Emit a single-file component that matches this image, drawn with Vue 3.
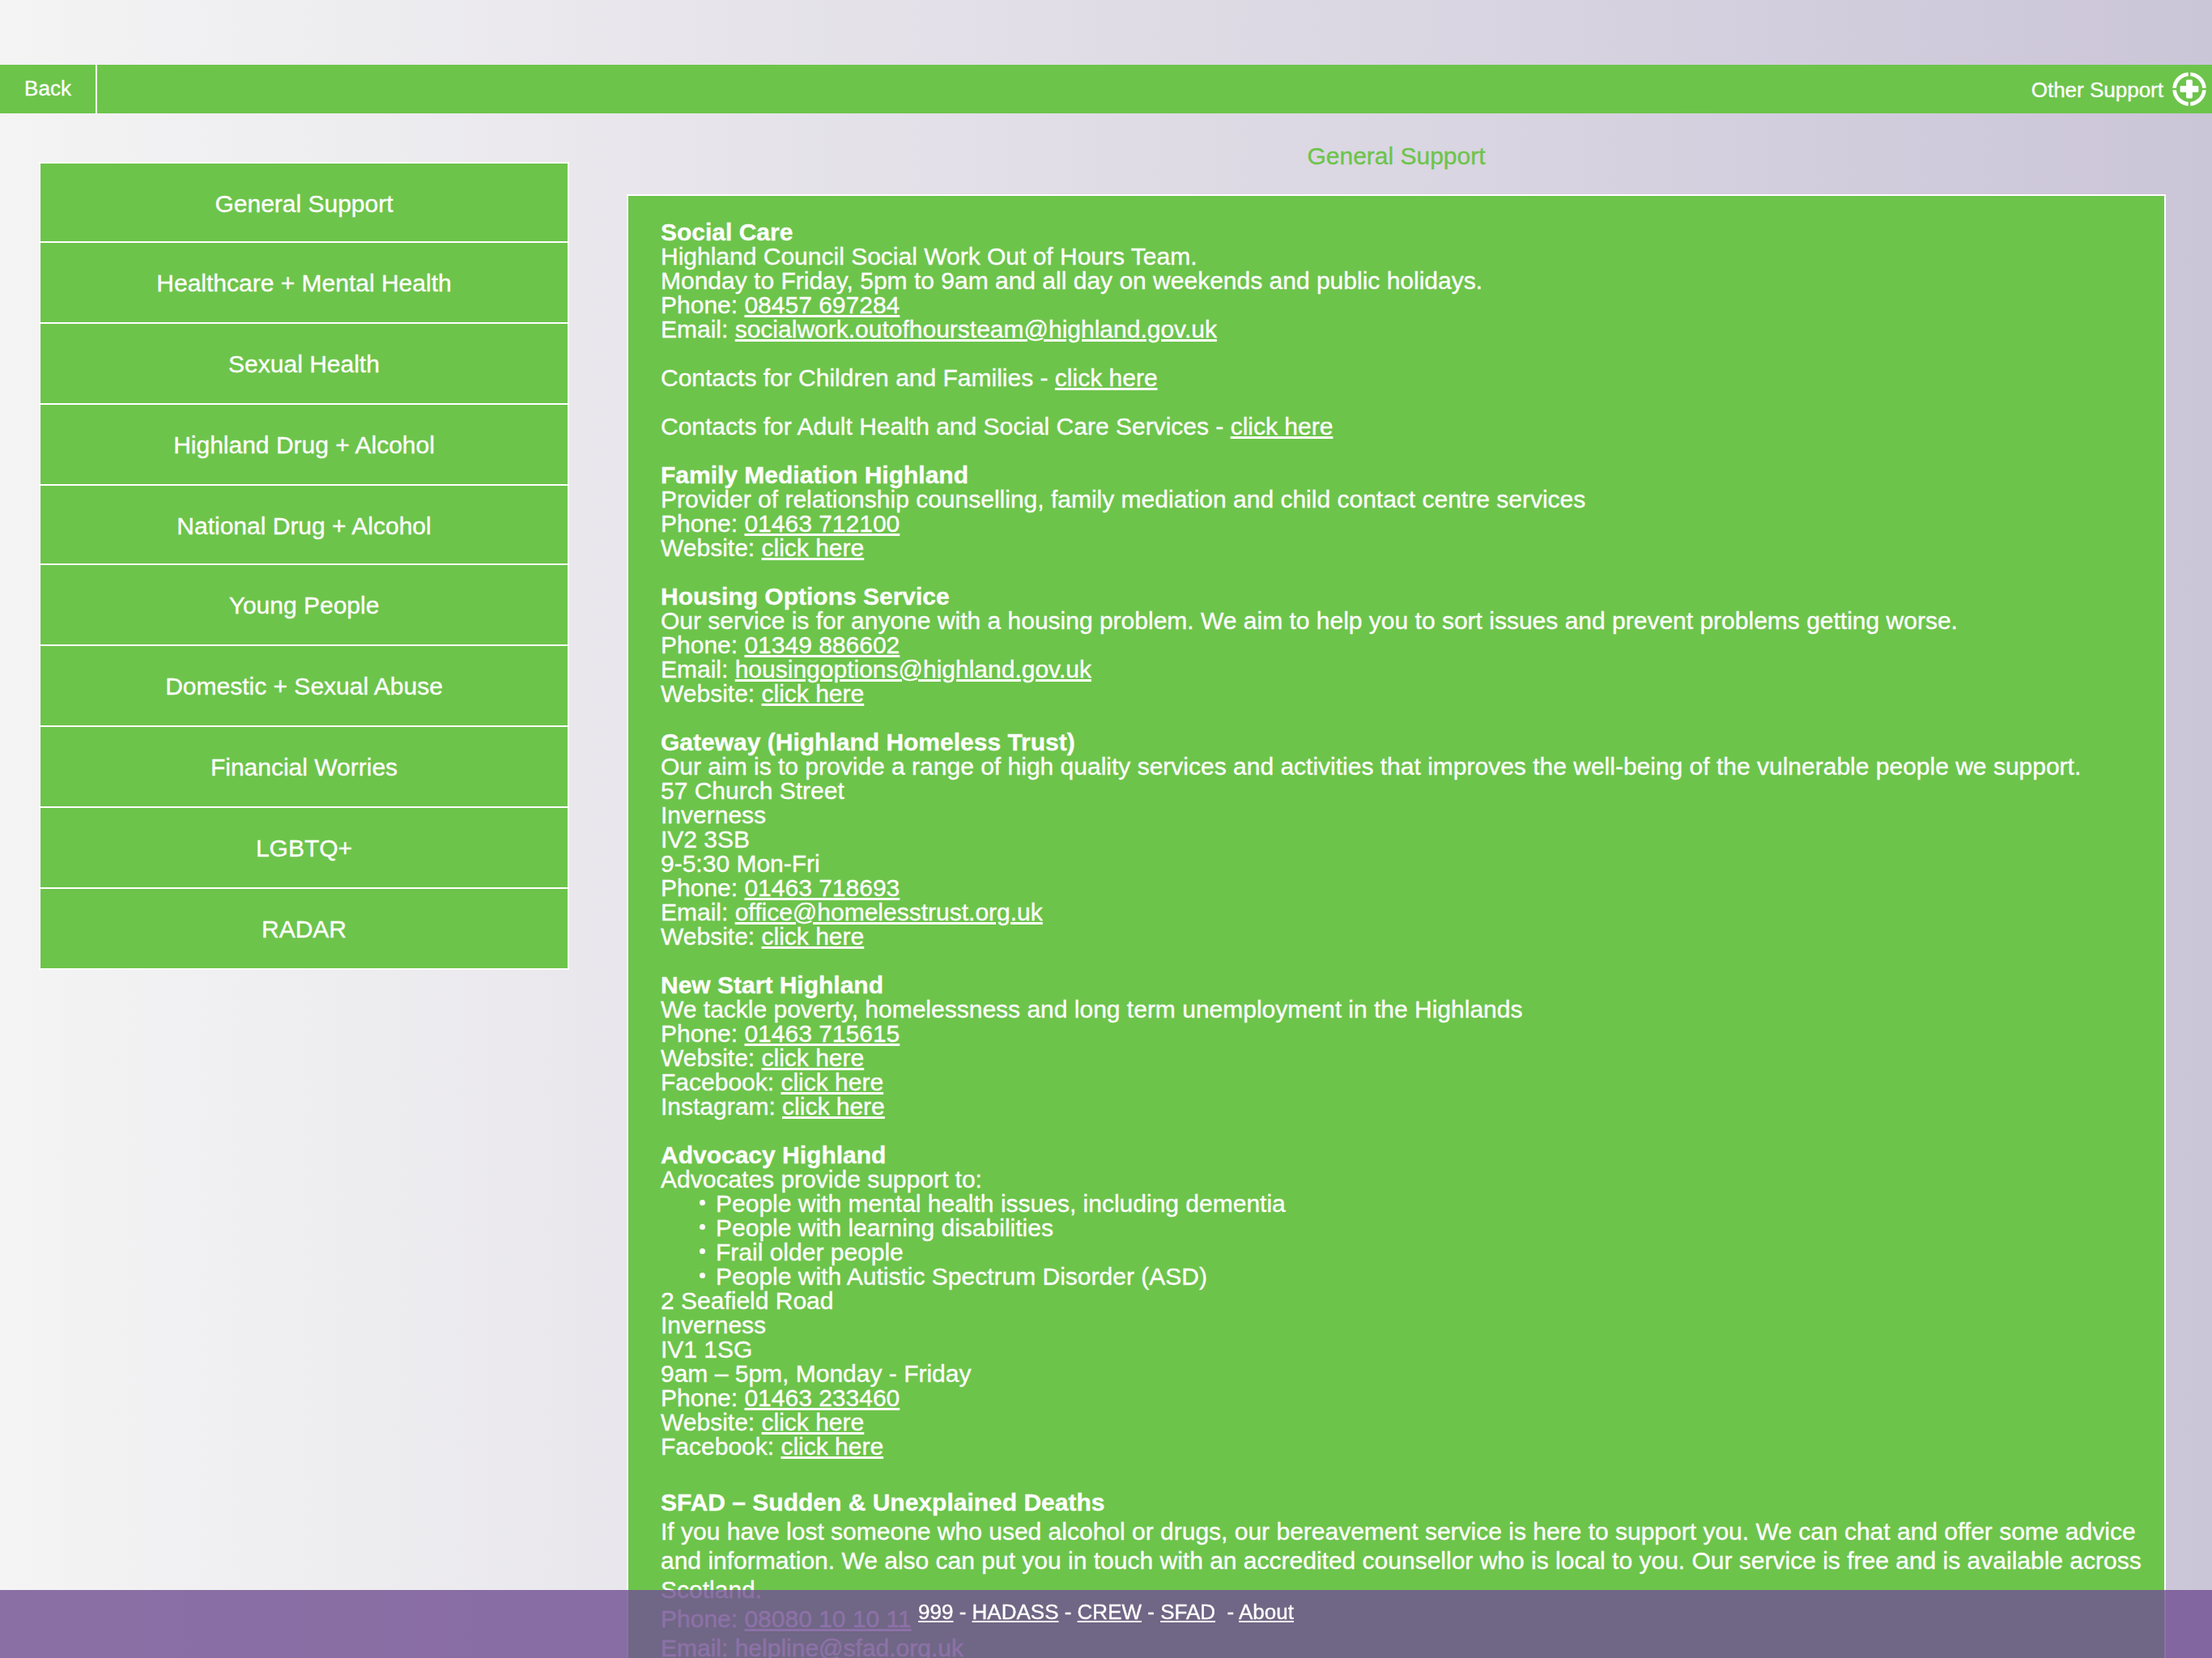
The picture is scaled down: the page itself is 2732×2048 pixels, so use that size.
<template>
  <div class="page">
    <header class="topbar">
      <a class="back">Back</a>
      <div class="other">
        <span class="other-label">Other Support</span>
        <svg class="other-icon" viewBox="0 0 42 42">
          <circle cx="21" cy="21" r="18.4" fill="none" stroke="#fff" stroke-width="4.7" />
          <path d="M21 0V42M0 21H42" stroke="#6dc44b" stroke-width="2.6" />
          <path
            d="M18.4 9.6h5.2a1.3 1.3 0 0 1 1.3 1.3v6.2h6.2a1.3 1.3 0 0 1 1.3 1.3v5.2a1.3 1.3 0 0 1-1.3 1.3h-6.2v6.2a1.3 1.3 0 0 1-1.3 1.3h-5.2a1.3 1.3 0 0 1-1.3-1.3v-6.2h-6.2a1.3 1.3 0 0 1-1.3-1.3v-5.2a1.3 1.3 0 0 1 1.3-1.3h6.2v-6.2a1.3 1.3 0 0 1 1.3-1.3z"
            fill="#fff"
          />
        </svg>
      </div>
    </header>

    <main class="content">
      <!-- Category menu -->
      <nav class="menu">
        <a
          v-for="(item, index) in categories"
          :key="item"
          class="menu-item"
          @click="active = index"
        >{{ item }}</a>
      </nav>

      <section class="detail">
        <h1 class="detail-title">{{ categories[active] }}</h1>
        <div class="panel">
          <div
            v-for="service in services"
            :key="service.name"
            :class="['service', { loose: service.loose }]"
          >
            <h2 class="service-name">{{ service.name }}</h2>
            <template v-for="(line, i) in service.lines" :key="i">
              <ul v-if="line.list" class="bullets">
                <li v-for="entry in line.list" :key="entry">{{ entry }}</li>
              </ul>
              <p v-else :class="{ spaced: line.spaced }">{{ line.text }}<a v-if="line.link">{{ line.link }}</a></p>
            </template>
          </div>
        </div>
      </section>
    </main>

    <footer class="footer">
      <a>999</a> - <a>HADASS</a> - <a>CREW</a> - <a>SFAD</a>&nbsp; - <a>About</a>
    </footer>
  </div>
</template>

<script setup>
import { ref } from 'vue'

const active = ref(0)

const categories = [
  'General Support',
  'Healthcare + Mental Health',
  'Sexual Health',
  'Highland Drug + Alcohol',
  'National Drug + Alcohol',
  'Young People',
  'Domestic + Sexual Abuse',
  'Financial Worries',
  'LGBTQ+',
  'RADAR'
]

const services = [
  {
    name: 'Social Care',
    lines: [
      { text: 'Highland Council Social Work Out of Hours Team.' },
      { text: 'Monday to Friday, 5pm to 9am and all day on weekends and public holidays.' },
      { text: 'Phone: ', link: '08457 697284' },
      { text: 'Email: ', link: 'socialwork.outofhoursteam@highland.gov.uk' },
      { text: 'Contacts for Children and Families - ', link: 'click here', spaced: true },
      { text: 'Contacts for Adult Health and Social Care Services - ', link: 'click here', spaced: true }
    ]
  },
  {
    name: 'Family Mediation Highland',
    lines: [
      { text: 'Provider of relationship counselling, family mediation and child contact centre services' },
      { text: 'Phone: ', link: '01463 712100' },
      { text: 'Website: ', link: 'click here' }
    ]
  },
  {
    name: 'Housing Options Service',
    lines: [
      { text: 'Our service is for anyone with a housing problem. We aim to help you to sort issues and prevent problems getting worse.' },
      { text: 'Phone: ', link: '01349 886602' },
      { text: 'Email: ', link: 'housingoptions@highland.gov.uk' },
      { text: 'Website: ', link: 'click here' }
    ]
  },
  {
    name: 'Gateway (Highland Homeless Trust)',
    lines: [
      { text: 'Our aim is to provide a range of high quality services and activities that improves the well-being of the vulnerable people we support.' },
      { text: '57 Church Street' },
      { text: 'Inverness' },
      { text: 'IV2 3SB' },
      { text: '9-5:30 Mon-Fri' },
      { text: 'Phone: ', link: '01463 718693' },
      { text: 'Email: ', link: 'office@homelesstrust.org.uk' },
      { text: 'Website: ', link: 'click here' }
    ]
  },
  {
    name: 'New Start Highland',
    lines: [
      { text: 'We tackle poverty, homelessness and long term unemployment in the Highlands' },
      { text: 'Phone: ', link: '01463 715615' },
      { text: 'Website: ', link: 'click here' },
      { text: 'Facebook: ', link: 'click here' },
      { text: 'Instagram: ', link: 'click here' }
    ]
  },
  {
    name: 'Advocacy Highland',
    lines: [
      { text: 'Advocates provide support to:' },
      {
        list: [
          'People with mental health issues, including dementia',
          'People with learning disabilities',
          'Frail older people',
          'People with Autistic Spectrum Disorder (ASD)'
        ]
      },
      { text: '2 Seafield Road' },
      { text: 'Inverness' },
      { text: 'IV1 1SG' },
      { text: '9am – 5pm, Monday - Friday' },
      { text: 'Phone: ', link: '01463 233460' },
      { text: 'Website: ', link: 'click here' },
      { text: 'Facebook: ', link: 'click here' }
    ]
  },
  {
    name: 'SFAD – Sudden & Unexplained Deaths',
    loose: true,
    lines: [
      { text: 'If you have lost someone who used alcohol or drugs, our bereavement service is here to support you. We can chat and offer some advice and information. We also can put you in touch with an accredited counsellor who is local to you. Our service is free and is available across Scotland.' },
      { text: 'Phone: ', link: '08080 10 10 11' },
      { text: 'Email: ', link: 'helpline@sfad.org.uk' }
    ]
  }
]
</script>

<style>
body {
  margin: 0;
  overflow: hidden;
}
</style>

<style scoped>
.page {
  box-sizing: border-box;
  height: 100vh;
  padding-top: 80px;
  overflow: hidden;
  background: linear-gradient(90deg, #f4f4f4 0%, #cbc5d8 100%);
  font-family: Helvetica, "Liberation Sans", Arial, sans-serif;
  font-size: 30px;
  line-height: 30px;
  color: #fff;
  -webkit-text-stroke: 0.35px;
}

/* Top bar */
.topbar {
  display: flex;
  justify-content: space-between;
  height: 60px;
  background: #6dc44b;
  font-size: 26px;
}

.back {
  width: 118px;
  border-right: 2px solid #fff;
  line-height: 59px;
  text-align: center;
}

.other {
  display: flex;
  align-items: center;
  gap: 11px;
  padding-right: 7px;
}

.other-label {
  padding-top: 2px;
}

.other-icon {
  width: 42px;
  height: 42px;
}

.content {
  display: flex;
  align-items: flex-start;
  gap: 71px;
  padding: 0 57px 0 48px;
}

/* Category menu */
.menu {
  box-sizing: border-box;
  width: 655px;
  margin-top: 60px;
  border: 2px solid #fff;
  border-bottom: 0;
}

.menu-item {
  display: block;
  box-sizing: border-box;
  height: 100px;
  border-bottom: 2px solid #fff;
  background: #6dc44b;
  line-height: 100px;
  text-align: center;
}

.menu-item:nth-child(4n + 1):not(:nth-child(9)) {
  height: 98px;
}

/* Service details */
.detail {
  flex: 1;
}

.detail-title {
  margin: 0;
  height: 100px;
  font-size: 30px;
  font-weight: 400;
  line-height: 105px;
  text-align: center;
  color: #6dc44b;
}

.panel {
  border: 2px solid #fff;
  padding: 30px 20px 40px 40px;
  background: #6dc44b;
}

.service {
  margin-bottom: 30px;
}

.service-name {
  margin: 0;
  font-size: 30px;
  font-weight: 700;
  line-height: inherit;
}

.service p {
  margin: 0;
}

.service p.spaced {
  margin-top: 30px;
}

.service a,
.footer a {
  text-decoration: underline;
}

.service.loose {
  margin-top: 36px;
  line-height: 36px;
}

.bullets {
  margin: 0;
  padding-left: 68px;
  list-style: none;
}

.bullets li::before {
  content: '';
  display: inline-block;
  width: 7px;
  height: 7px;
  margin: 0 13px 8px -20px;
  border-radius: 50%;
  background: #fff;
  vertical-align: baseline;
}

.footer {
  position: fixed;
  left: 0;
  right: 0;
  bottom: 0;
  box-sizing: border-box;
  height: 84px;
  padding-top: 12px;
  background: rgba(113, 80, 147, 0.81);
  font-size: 26px;
  text-align: center;
}
</style>
